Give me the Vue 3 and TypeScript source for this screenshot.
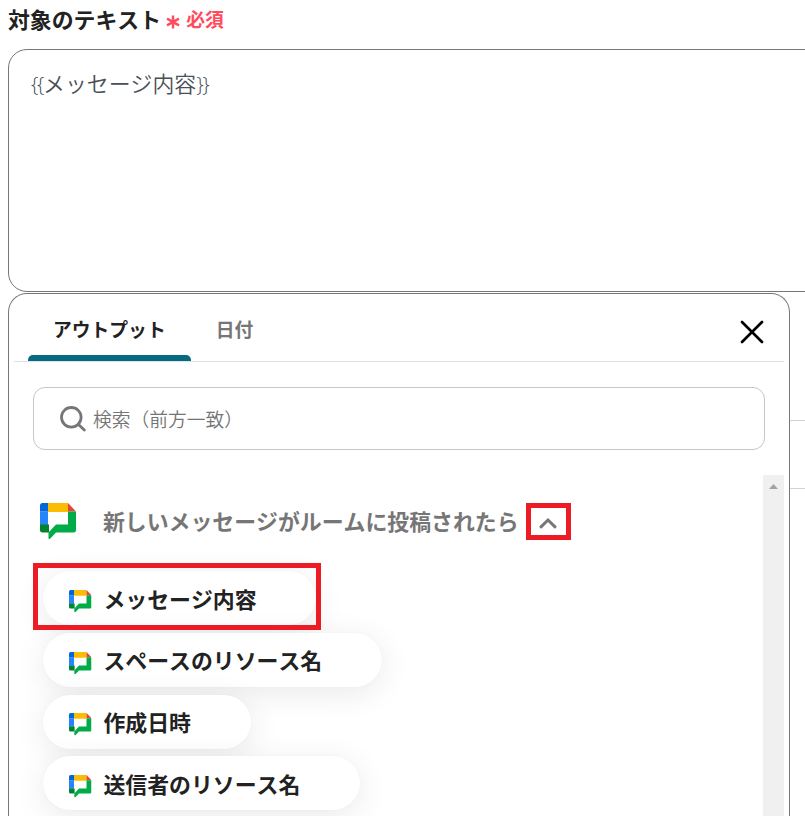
<script setup lang="ts">
import { ref } from 'vue'

const open = '{'.repeat(2)
const close = '}'.repeat(2)
const text = ref<string>('メッセージ内容')
const tabs: string[] = ['アウトプット', '日付']
const activeTab = ref<number>(0)
const outputs: string[] = ['メッセージ内容', 'スペースのリソース名', '作成日時', '送信者のリソース名']
</script>

<template>
  <svg class="defs" aria-hidden="true">
    <symbol id="chat" viewBox="0 0 36 36">
      <path d="M8 0H28V9H8Z" fill="#fbbc04" />
      <path d="M28 0L36 8.5H28Z" fill="#ea4335" />
      <path d="M0 8.5H8V22H0Z" fill="#2684fc" />
      <path d="M2.5 0H8V8.5H0V2.5Q0 0 2.5 0Z" fill="#0066da" />
      <path d="M0 21.5H9V29.5H2.5Q0 29.5 0 27Z" fill="#00832d" />
      <path d="M28 8.5H36V27Q36 29.5 33.5 29.5H16L10.3 35.4Q8.5 36.8 8.5 34.8V29.5L16 21.5H28Z" fill="#00ac47" />
    </symbol>
  </svg>
  <main class="page">
    <label class="label">
      <span>対象のテキスト</span>
      <svg class="star" viewBox="0 0 14 14"><path d="M7 .5V13.5M1 3.6L13 10.4M13 3.6L1 10.4" /></svg>
      <span class="required">必須</span>
    </label>
    <div class="textarea"><span class="brace">{{ open }}</span>{{ text }}<span class="brace">{{ close }}</span></div>
    <div class="lower">
      <section class="panel">
        <header class="tabs">
          <button v-for="(tab, i) in tabs" :key="tab" class="tab" :class="{ active: i === activeTab }" @click="activeTab = i">{{ tab }}</button>
          <svg class="close" viewBox="0 0 24 24"><path d="M2 2L22 22M22 2L2 22" /></svg>
        </header>
        <div class="search">
          <svg class="lens" viewBox="0 0 26 26"><circle cx="11.3" cy="11.3" r="9.8" /><path d="M18.5 18.5L24.3 24" /></svg>
          <span>検索（前方一致）</span>
        </div>
        <div class="results">
          <div class="list">
            <div class="group">
              <svg class="app-icon"><use href="#chat" /></svg>
              <span class="group-name">新しいメッセージがルームに投稿されたら</span>
              <span class="toggle"><svg viewBox="0 0 18 12"><path d="M2 9.8L9 3L16 9.8" /></svg></span>
            </div>
            <div class="chips">
              <div v-for="(name, i) in outputs" :key="name" class="chip">
                <svg class="chip-icon"><use href="#chat" /></svg>
                <span>{{ name }}</span>
                <i v-if="i === 0" class="highlight"></i>
              </div>
            </div>
          </div>
          <div class="scrollbar"><svg viewBox="0 0 9 5"><path d="M0 5L4.5 0L9 5Z" /></svg></div>
        </div>
      </section>
      <aside class="side"></aside>
    </div>
  </main>
</template>

<style>
body {
  background: #fff;
  overflow: hidden;
}
</style>

<style scoped>
.defs {
  position: absolute;
  width: 0;
  height: 0;
}
.page {
  box-sizing: border-box;
  width: 805px;
  height: 816px;
  overflow: hidden;
  padding-left: 8px;
  display: flex;
  flex-direction: column;
  font-family: "Noto Sans CJK JP", sans-serif;
  font-size: 21.88px;
  font-kerning: none;
  color: #222;
}
.page svg {
  display: block;
  flex: none;
}
.label {
  flex: none;
  display: flex;
  align-items: center;
  height: 38px;
  margin-bottom: 11px;
  font-weight: 700;
  line-height: 38px;
}
.star {
  width: 14px;
  height: 14px;
  margin: 6px 6px 0 5px;
  fill: none;
  stroke: #ff4b5e;
  stroke-width: 2.4;
}
.required {
  font-size: 18.8px;
  color: #ff4b5e;
}
.textarea {
  box-sizing: border-box;
  flex: none;
  width: 822px;
  height: 243px;
  padding: 16px 22px;
  border: 1px solid #767676;
  border-radius: 19px;
  line-height: 34px;
  color: #495057;
  font-weight: 350;
}
.brace {
  display: inline-block;
  font-family: "Open Sans", sans-serif;
  font-size: 21px;
  letter-spacing: -1.4px;
}
.lower {
  flex: 1;
  min-height: 0;
  display: flex;
  margin-top: 1px;
}
.panel {
  box-sizing: border-box;
  flex: none;
  width: 782px;
  display: flex;
  flex-direction: column;
  border: 1px solid #767676;
  border-bottom: 0;
  border-radius: 19px 19px 0 0;
  padding: 0 5px;
}
.tabs {
  box-sizing: border-box;
  flex: none;
  display: flex;
  height: 68px;
  padding: 0 20px 0 14px;
  border-bottom: 1px solid #dee2e6;
}
.tab {
  box-sizing: border-box;
  height: 67px;
  padding: 5px 25px 0;
  border: 0;
  background: none;
  font: 700 18.8px/60px "Noto Sans CJK JP", sans-serif;
  font-kerning: none;
  color: #767676;
  display: flex;
  flex-direction: column;
}
.active {
  color: #222;
}
.active::after {
  content: "";
  align-self: stretch;
  flex: none;
  height: 6px;
  margin: -4px -25px 0;
  border-radius: 5px 5px 0 0;
  background: #066a80;
}
.close {
  width: 24px;
  height: 24px;
  margin: 26px 0 0 auto;
  fill: none;
  stroke: #000;
  stroke-width: 2.7;
  stroke-linecap: round;
}
.search {
  box-sizing: border-box;
  flex: none;
  display: flex;
  align-items: center;
  height: 63px;
  margin: 25px 19px;
  padding: 0 26px 1px;
  border: 1px solid #c6c6c6;
  border-radius: 12px;
  font-size: 18.75px;
  font-weight: 350;
  color: #757575;
}
.lens {
  width: 26px;
  height: 26px;
  margin: 1px 7px 0 0;
  fill: none;
  stroke: #767676;
  stroke-width: 2.8;
  stroke-linecap: round;
}
.results {
  flex: 1;
  min-height: 0;
  display: flex;
}
.list {
  flex: 1;
  padding-top: 24px;
}
.group {
  display: flex;
  align-items: center;
  height: 44px;
  padding-left: 25.5px;
}
.app-icon {
  width: 36px;
  height: 36px;
}
.group-name {
  margin-left: 27.5px;
  line-height: 44px;
  font-weight: 700;
  color: #767676;
}
.toggle {
  box-sizing: border-box;
  width: 45px;
  height: 37px;
  margin-left: 7.2px;
  display: flex;
  align-items: center;
  justify-content: center;
  border: 5px solid #ed1c24;
}
.toggle svg {
  width: 18px;
  height: 12px;
  margin-top: 3px;
  fill: none;
  stroke: #767676;
  stroke-width: 3;
  stroke-linecap: round;
}
.chips {
  display: flex;
  flex-direction: column;
  align-items: flex-start;
  gap: 7.8px;
  padding: 28px 0 0 29px;
}
.chip {
  box-sizing: border-box;
  position: relative;
  display: flex;
  align-items: center;
  height: 54px;
  padding: 0 59.5px 0 26px;
  border-radius: 27px;
  background: #fff;
  box-shadow: 0 6px 32px rgba(0, 0, 0, 0.09), 0 0 2px rgba(0, 0, 0, 0.04);
  line-height: 56px;
  font-weight: 700;
  white-space: nowrap;
}
.chip span {
  padding-top: 1px;
}
.chip-icon {
  width: 22.5px;
  height: 22.5px;
  margin: 6px 12px 0 0;
}
.highlight {
  position: absolute;
  z-index: 1;
  inset: -8px -5px -5px -10px;
  border: 5px solid #ed1c24;
}
.scrollbar {
  flex: none;
  width: 21px;
  background: #f0f0f0;
}
.scrollbar svg {
  width: 9px;
  height: 5px;
  margin: 9px auto 0;
  fill: #a3a3a3;
}
.side {
  box-sizing: border-box;
  flex: 1;
  height: 69px;
  margin-top: 127px;
  border: solid #ced4da;
  border-width: 1px 0;
}
</style>
